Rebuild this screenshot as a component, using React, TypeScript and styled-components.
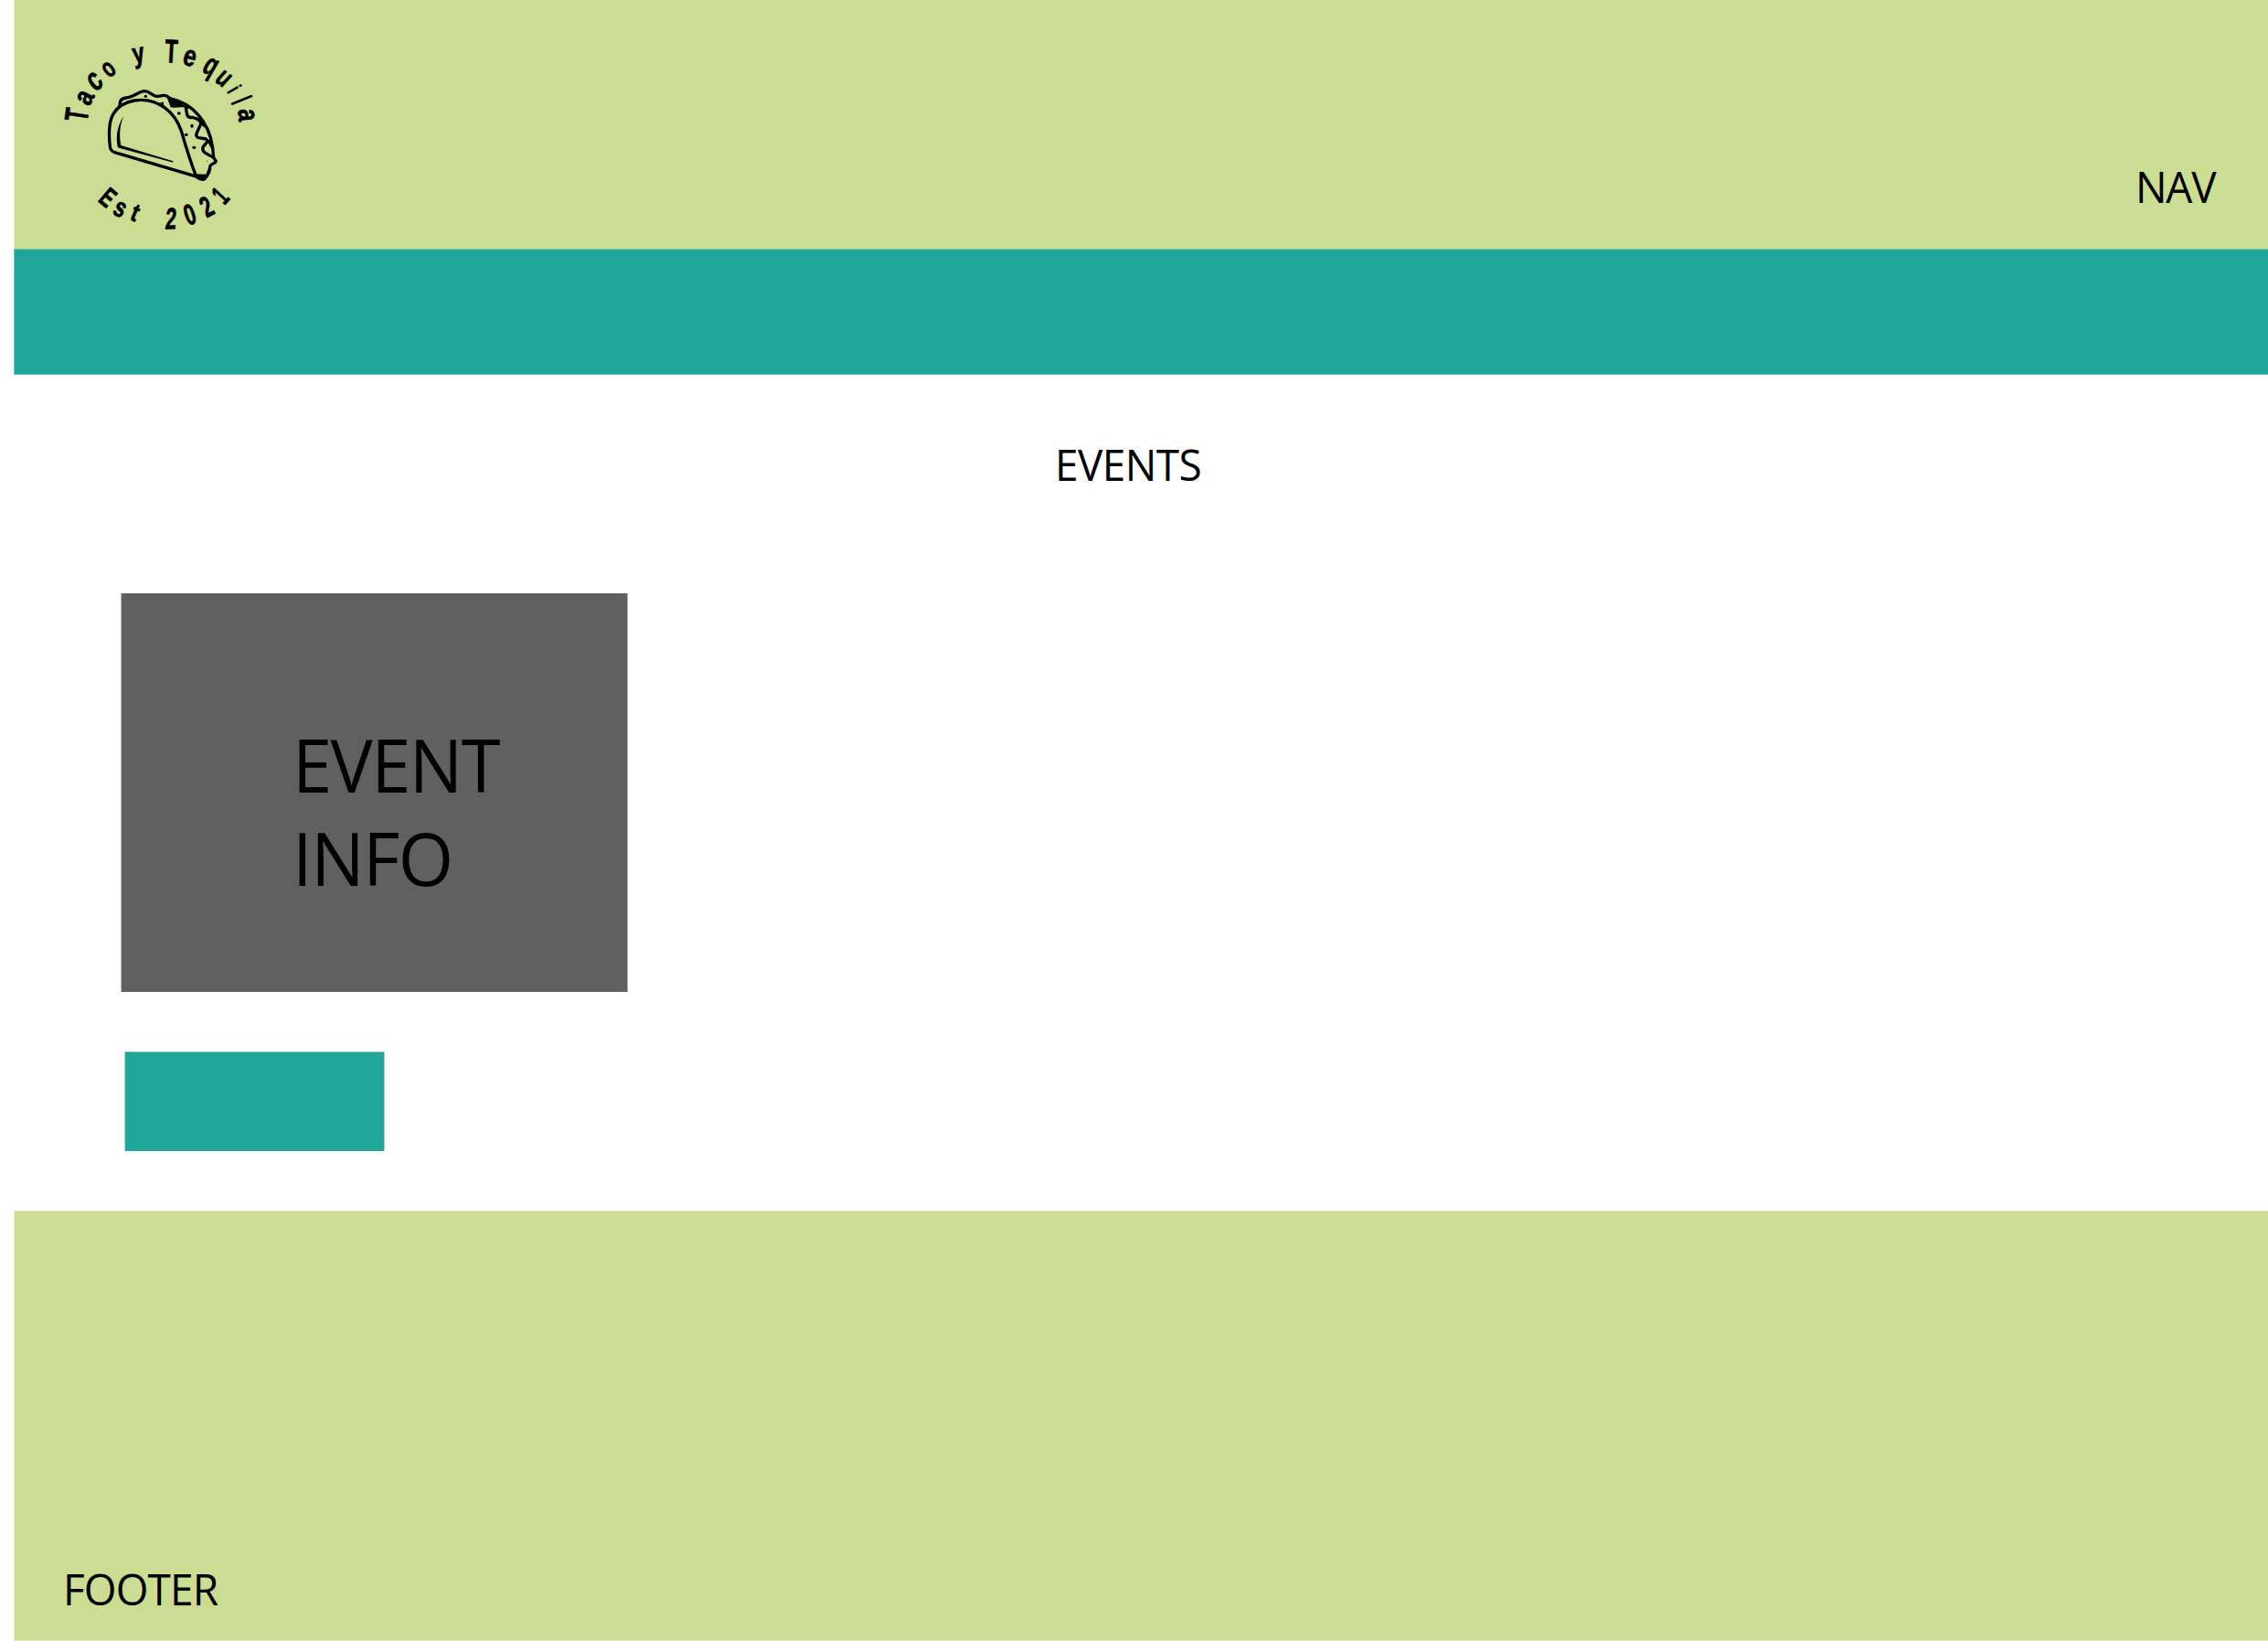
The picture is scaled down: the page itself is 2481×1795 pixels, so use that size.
import React from "react";
import styled, { createGlobalStyle } from "styled-components";

const GlobalStyle = createGlobalStyle`
  * { box-sizing: border-box; }
  html, body { margin: 0; padding: 0; background: #fefefe; }
  body { overflow: hidden; }
`;

const Page = styled.div`
  width: 2481px;
  height: 1795px;
  padding-left: 15px;
  display: flex;
  flex-direction: column;
  background: #fefefe;
  color: #000;
  font-family: "Open Sans", "Noto Sans", sans-serif;
`;

const Header = styled.header`
  height: 272px;
  flex: none;
  display: flex;
  justify-content: space-between;
  align-items: flex-start;
  padding: 30px 56px 0 45px;
  background: #cbdd92;
  border-left: 1px solid #e5eec9;
`;

const Banner = styled.div`
  height: 138px;
  flex: none;
  background: #20a699;
  border-left: 1px solid #7fc4b2;
  border-top: 1px solid #84c297;
  border-bottom: 1px solid #5fbfb5;
`;

const Main = styled.main`
  height: 914px;
  flex: none;
  display: flex;
  flex-direction: column;
  align-items: flex-start;
`;

const Footer = styled.footer`
  height: 471px;
  flex: none;
  display: flex;
  align-items: flex-end;
  padding: 0 0 24px 53px;
  background: #cbdd92;
  border: 1px solid #e5eec9;
  border-right: 0;
`;

const Label = styled.div<{ $spacing: number }>`
  font-size: 47.4px;
  font-weight: 400;
  line-height: 64px;
  letter-spacing: ${(p) => p.$spacing}px;
  white-space: nowrap;
  transform: scaleX(0.97);
  transform-origin: 0 50%;
`;

const NavLink = styled(Label)`
  width: 89px;
  margin-top: 142px;
`;

const Title = styled(Label)`
  margin: 66px 0 0 1139px;
`;

const EventCard = styled.section`
  width: 555px;
  height: 436px;
  margin: 109px 0 0 117px;
  padding: 136px 0 0 187px;
  background: #606060;
  border: 0 solid #b5b5b5;
  border-width: 0 1px;
`;

const EventLine = styled(Label)`
  font-size: 80px;
  line-height: 102px;
`;

const ActionButton = styled.button`
  display: block;
  width: 285px;
  height: 109px;
  margin: 65px 0 0 121px;
  padding: 0;
  background: #20a699;
  border: 1px solid #b0d9d0;
  border-bottom: 0;
`;

const LogoSvg = styled.svg`
  display: block;
  width: 230px;
  height: 230px;
  flex: none;
`;

const LogoGlyph = styled.text`
  font-family: "Liberation Sans", sans-serif;
  font-weight: 700;
  text-anchor: middle;
  fill: #000;
  stroke: #000;
  stroke-width: 0.7px;
  stroke-linejoin: round;
`;

type Glyph = {
  ch: string;
  x: number;
  y: number;
  turn: number;
  size: number;
  narrow: number;
  lift: number;
  slant?: number;
};

const CAP = 0.345;
const LOW = 0.265;
const DESC = 0.16;

const topArc: Glyph[] = [
  { ch: "T", x: 84, y: 125.5, turn: -82, size: 36, narrow: 0.64, lift: CAP },
  { ch: "a", x: 93.5, y: 107, turn: -62, size: 31, narrow: 0.8, lift: LOW },
  { ch: "c", x: 104, y: 89, turn: -48, size: 35, narrow: 0.72, lift: LOW, slant: -10 },
  { ch: "o", x: 119, y: 76, turn: -38, size: 30, narrow: 0.66, lift: LOW },
  { ch: "y", x: 152, y: 63.5, turn: -10, size: 31, narrow: 0.76, lift: DESC },
  { ch: "T", x: 187.5, y: 56, turn: 3, size: 36, narrow: 0.64, lift: CAP },
  { ch: "e", x: 207.5, y: 63.5, turn: 16, size: 32, narrow: 0.78, lift: LOW },
  { ch: "q", x: 228.5, y: 76, turn: 24, size: 34, narrow: 0.66, lift: DESC, slant: -6 },
  { ch: "u", x: 244.5, y: 86, turn: 36, size: 31, narrow: 0.7, lift: LOW, slant: -6 },
  { ch: "i", x: 256.5, y: 97.5, turn: 60, size: 24, narrow: 0.6, lift: 0.36 },
  { ch: "l", x: 264.5, y: 109.5, turn: 68, size: 33, narrow: 0.5, lift: 0.36 },
  { ch: "a", x: 269.5, y: 126, turn: 86, size: 32, narrow: 0.76, lift: LOW },
];

const bottomArc: Glyph[] = [
  { ch: "E", x: 118, y: 216, turn: 40, size: 30, narrow: 0.68, lift: CAP },
  { ch: "s", x: 131, y: 229, turn: 26, size: 30, narrow: 0.74, lift: LOW },
  { ch: "t", x: 148, y: 233, turn: 23, size: 28, narrow: 0.8, lift: 0.32 },
  { ch: "2", x: 187, y: 239, turn: -2, size: 33, narrow: 0.66, lift: CAP, slant: -6 },
  { ch: "0", x: 207.5, y: 234.5, turn: -18, size: 32, narrow: 0.68, lift: CAP },
  { ch: "2", x: 226, y: 226, turn: -28, size: 32, narrow: 0.66, lift: CAP },
  { ch: "1", x: 241, y: 214, turn: -47, size: 31, narrow: 0.6, lift: CAP },
];

function ArcText({ glyphs }: { glyphs: Glyph[] }) {
  return (
    <g>
      {glyphs.map((g, i) => (
        <LogoGlyph
          key={i}
          fontSize={g.size}
          y={g.lift * g.size}
          transform={`translate(${g.x} ${g.y}) rotate(${g.turn}) skewX(${g.slant ?? 0}) scale(${g.narrow} 1)`}
        >
          {g.ch}
        </LogoGlyph>
      ))}
    </g>
  );
}

function Logo() {
  return (
    <LogoSvg viewBox="61 30 230 230" role="img" aria-label="Taco y Tequila Est 2021">
      <ArcText glyphs={topArc} />
      <g
        transform="translate(100 85) scale(0.33333)"
        fill="none"
        stroke="#000"
        strokeWidth="10"
        strokeLinejoin="round"
        strokeLinecap="round"
      >
        <path d="M350 326 L76 245 Q62 240 61 225 C57 190 56 150 70 122 C85 95 110 80 140 75 C180 69 215 80 240 98 C270 120 285 145 295 175 C308 220 322 268 343 322" />
        <path d="M93 93 C93 74 98 68 114 66 C138 64 150 48 172 44 C190 42 196 58 213 61 C228 62 236 53 250 62 L264 73" />
        <path d="M262 71 C330 82 385 145 397 225 C400 243 400 254 401 262 L409 274 C405 284 391 282 389 291 C390 308 380 322 372 330" />
        <path d="M310 98 L314 122 Q318 133 332 130 C345 134 360 138 359 152 L345 183 Q342 194 352 197 L376 201 L382 208 L367 226 Q362 240 374 247 L402 263" />
        <g fill="#000" stroke="none">
          <path d="M106 126 C84 158 80 195 86 226 Q87 231 95 232 L268 278 L268 274 L97 222 C91 190 92 158 106 126 Z" />
          <path d="M246 60 C285 70 310 78 340 105 L318 101 L302 97 C285 95 275 101 260 97 Z" />
          <path d="M340 316 L376 317 L386 292 L393 292 C388 318 379 337 368 339 C356 339 345 333 337 324 Z" />
          <path d="M223 84 L236 79 L239 98 Z" />
          <path d="M380 206 L391 202 L398 240 L387 222 Z" />
          <path d="M347 133 L362 135 L372 165 L358 153 Z" />
          <ellipse cx="178" cy="61" rx="5" ry="5" />
          <ellipse cx="287" cy="117" rx="6" ry="5" />
          <ellipse cx="330" cy="158" rx="5" ry="6" />
          <ellipse cx="311" cy="187" rx="6" ry="5" />
          <ellipse cx="337" cy="229" rx="6" ry="5" />
          <circle cx="380" cy="274" r="1.5" />
        </g>
      </g>
      <ArcText glyphs={bottomArc} />
    </LogoSvg>
  );
}

export default function App() {
  return (
    <>
      <GlobalStyle />
      <Page>
        <Header>
          <Logo />
          <NavLink as="nav" $spacing={-1.3}>NAV</NavLink>
        </Header>
        <Banner />
        <Main>
          <Title as="h1" $spacing={-0.6}>EVENTS</Title>
          <EventCard>
            <EventLine $spacing={-1.6}>EVENT</EventLine>
            <EventLine $spacing={-1.5}>INFO</EventLine>
          </EventCard>
          <ActionButton />
        </Main>
        <Footer>
          <Label $spacing={-0.9}>FOOTER</Label>
        </Footer>
      </Page>
    </>
  );
}
